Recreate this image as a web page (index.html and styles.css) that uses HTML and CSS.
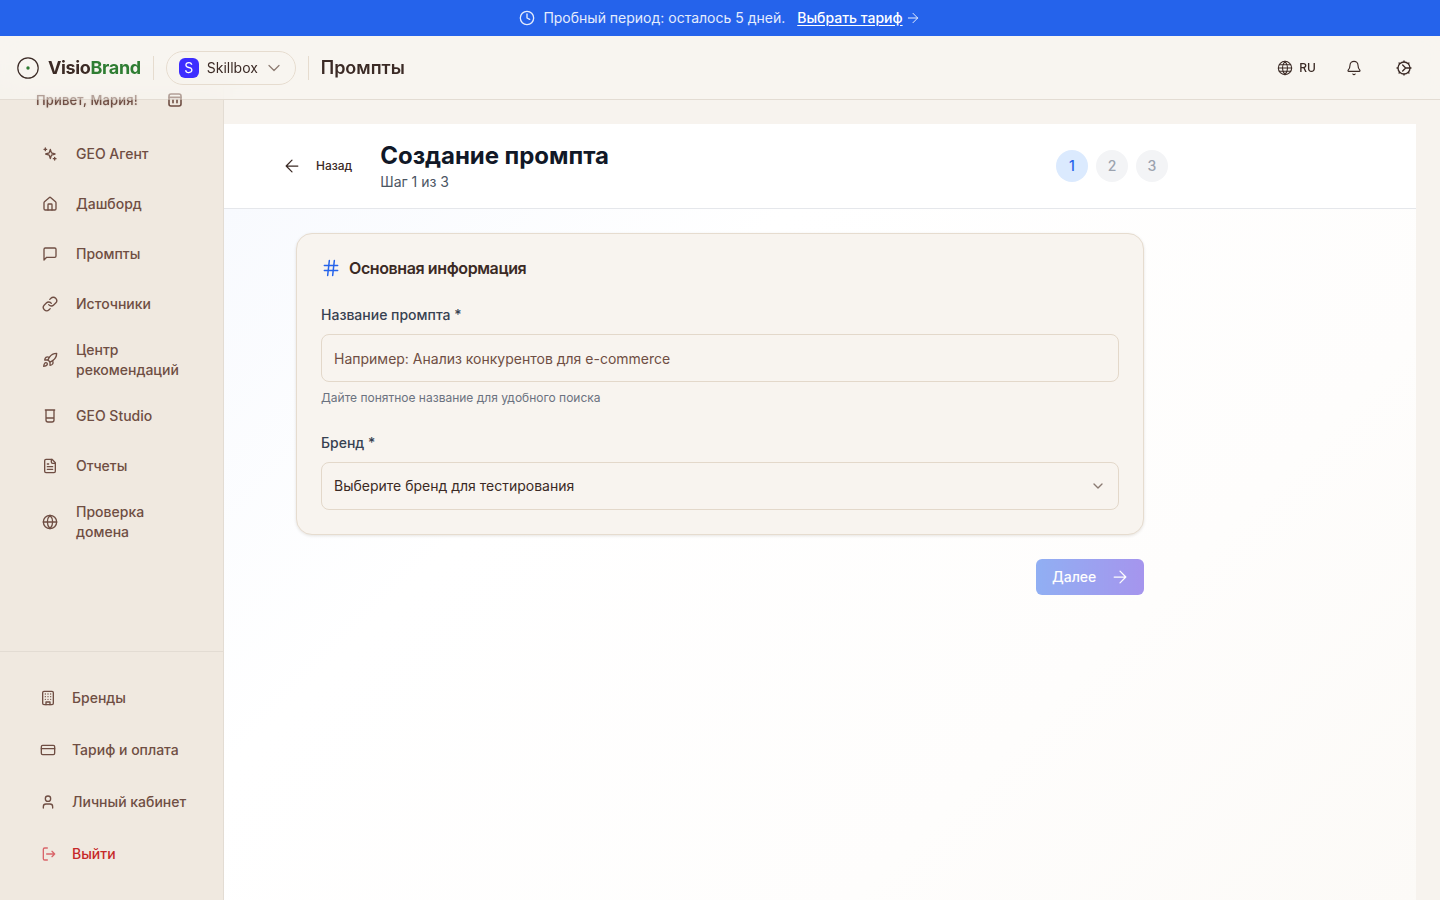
FILE: index.html
```html
<!DOCTYPE html>
<html lang="ru">
	<head>
		<meta charset="UTF-8" />
		<meta name="viewport" content="width=device-width, initial-scale=1.0" />
		<title>Создание промпта</title>
		<link rel="stylesheet" href="styles.css">
	</head>
	<body>
		<div class="trial-banner">
			<svg class="trial-clock" viewBox="0 0 24 24"><circle cx="12" cy="12" r="10"/><path d="M12 6v6l4 2"/></svg>
			<span>Пробный период: осталось 5 дней.</span>
			<a class="trial-link">Выбрать тариф</a>
			<svg class="trial-arrow" viewBox="0 0 24 24"><path d="M5 12h14M12 5l7 7-7 7"/></svg>
		</div>

		<div class="shell">
			<header class="topbar">
				<div class="logo">
					<svg class="logo-mark" viewBox="0 0 22 22"><circle cx="11" cy="11" r="10.2"/><circle class="logo-dot" cx="11" cy="11" r="1.7"/></svg>
					<span class="logo-text">Visio<b>Brand</b></span>
				</div>
				<div class="topbar-sep"></div>
				<div class="brand-pill">
					<span class="brand-badge">S</span>
					<span>Skillbox</span>
					<svg class="pill-chevron" viewBox="0 0 24 24"><path d="m6 9 6 6 6-6"/></svg>
				</div>
				<div class="topbar-sep"></div>
				<div class="topbar-title">Промпты</div>
				<div class="topbar-right">
					<div class="lang">
						<svg class="icon-globe" viewBox="0 0 24 24"><circle cx="12" cy="12" r="10"/><path d="M2 12h20M3.500 7h17M3.500 17h17M12 2a15 15 0 0 1 0 20 15 15 0 0 1 0-20"/></svg>
						<span>RU</span>
					</div>
					<svg class="icon-bell" viewBox="0 0 24 24"><path d="M10.300 21a2 2 0 0 0 3.400 0"/><path d="M3.300 15.300A1 1 0 0 0 4 17h16a1 1 0 0 0 .7-1.700C19.400 14 18 12.500 18 8A6 6 0 0 0 6 8c0 4.500-1.400 6-2.700 7.300"/></svg>
					<svg class="icon-theme" viewBox="0 0 24 24"><circle cx="12" cy="12" r="9"/><path d="M12 1.500v1M12 21.500v1M1.500 12h1M21.500 12h1M4.600 4.600l.7.7M18.700 18.700l.7.7M4.600 19.400l.7-.7M18.700 5.300l.7-.7M10 7.500 14.500 12 10 16.500M14.500 12H21"/></svg>
				</div>
			</header>

			<aside class="sidebar">
				<div class="greeting">
					<span>Привет, Мария!</span>
					<svg class="greeting-icon" viewBox="0 0 24 24"><rect x="3" y="3" width="18" height="18" rx="3"/><path d="M3 8h18M9 12v4M15 12v4"/></svg>
				</div>
				<nav class="nav-main">
					<a class="nav-item">
						<svg class="nav-icon" viewBox="0 0 24 24"><path d="m12.500 5 1.700 5.300 5.300 1.700-5.300 1.700-1.700 5.300-1.700-5.300L5.500 12l5.300-1.700z"/><path d="M5 3v4M3 5h4M19 17v4M17 19h4"/></svg>
						<span>GEO Агент</span>
					</a>
					<a class="nav-item">
						<svg class="nav-icon" viewBox="0 0 24 24"><path d="M15 21v-8a1 1 0 0 0-1-1h-4a1 1 0 0 0-1 1v8"/><path d="M3 10a2 2 0 0 1 .7-1.500l7-6a2 2 0 0 1 2.600 0l7 6a2 2 0 0 1 .7 1.500v9a2 2 0 0 1-2 2H5a2 2 0 0 1-2-2z"/></svg>
						<span>Дашборд</span>
					</a>
					<a class="nav-item">
						<svg class="nav-icon" viewBox="0 0 24 24"><path d="M21 15a2 2 0 0 1-2 2H7l-4 4V5a2 2 0 0 1 2-2h14a2 2 0 0 1 2 2z"/></svg>
						<span>Промпты</span>
					</a>
					<a class="nav-item">
						<svg class="nav-icon" viewBox="0 0 24 24"><path d="M10 13a5 5 0 0 0 7.500.5l3-3a5 5 0 0 0-7.100-7.100l-1.700 1.700"/><path d="M14 11a5 5 0 0 0-7.500-.5l-3 3a5 5 0 0 0 7.100 7.100l1.700-1.700"/></svg>
						<span>Источники</span>
					</a>
					<a class="nav-item">
						<svg class="nav-icon" viewBox="0 0 24 24"><path d="M4.500 16.500c-1.500 1.300-2 5-2 5s3.700-.5 5-2c.7-.8.7-2.100-.1-2.900a2.200 2.200 0 0 0-2.900-.1"/><path d="m12 15-3-3a22 22 0 0 1 2-3.900A12.900 12.900 0 0 1 22 2c0 2.700-.8 7.500-6 11a22 22 0 0 1-4 2"/><path d="M9 12H4s.5-3 2-4c1.600-1.100 5 0 5 0M12 15v5s3-.5 4-2c1.100-1.600 0-5 0-5"/></svg>
						<span>Центр рекомендаций</span>
					</a>
					<a class="nav-item">
						<svg class="nav-icon" viewBox="0 0 24 24"><path d="M5 3h14M6 3v15a3 3 0 0 0 3 3h6a3 3 0 0 0 3-3V3M6 15h12"/></svg>
						<span>GEO Studio</span>
					</a>
					<a class="nav-item">
						<svg class="nav-icon" viewBox="0 0 24 24"><path d="M15 2H6a2 2 0 0 0-2 2v16a2 2 0 0 0 2 2h12a2 2 0 0 0 2-2V7z"/><path d="M14 2v4a2 2 0 0 0 2 2h4M10 9H8M16 13H8M16 17H8"/></svg>
						<span>Отчеты</span>
					</a>
					<a class="nav-item">
						<svg class="nav-icon" viewBox="0 0 24 24"><circle cx="12" cy="12" r="10"/><path d="M12 2a14.500 14.500 0 0 0 0 20 14.500 14.500 0 0 0 0-20M2 12h20"/></svg>
						<span>Проверка домена</span>
					</a>
				</nav>
				<div class="nav-bottom">
					<a class="nav-item">
						<svg class="nav-icon" viewBox="0 0 24 24"><rect x="4" y="2" width="16" height="20" rx="2"/><path d="M9 22v-4h6v4M8 6h.01M12 6h.01M16 6h.01M8 10h.01M12 10h.01M16 10h.01M8 14h.01M12 14h.01M16 14h.01"/></svg>
						<span>Бренды</span>
					</a>
					<a class="nav-item">
						<svg class="nav-icon" viewBox="0 0 24 24"><rect x="2" y="5" width="20" height="14" rx="2"/><path d="M2 10h20"/></svg>
						<span>Тариф и оплата</span>
					</a>
					<a class="nav-item">
						<svg class="nav-icon" viewBox="0 0 24 24"><path d="M19 21v-2a4 4 0 0 0-4-4H9a4 4 0 0 0-4 4v2"/><circle cx="12" cy="7" r="4"/></svg>
						<span>Личный кабинет</span>
					</a>
					<a class="nav-item nav-logout">
						<svg class="nav-icon" viewBox="0 0 24 24"><path d="M11 21H7a2 2 0 0 1-2-2V5a2 2 0 0 1 2-2h4M18 16l4-4-4-4M22 12H10"/></svg>
						<span>Выйти</span>
					</a>
				</div>
			</aside>

			<main class="content">
				<section class="panel">
					<div class="page-head">
						<div class="page-head-inner">
							<a class="back-btn">
								<svg class="back-arrow" viewBox="0 0 24 24"><path d="m12 19-7-7 7-7M19 12H5"/></svg>
								<span>Назад</span>
							</a>
							<div class="page-title">
								<h1>Создание промпта</h1>
								<p>Шаг 1 из 3</p>
							</div>
							<div class="steps">
								<span class="step step-active">1</span>
								<span class="step">2</span>
								<span class="step">3</span>
							</div>
						</div>
					</div>
					<div class="page-body">
						<div class="form-wrap">
							<div class="card">
								<div class="card-title">
									<svg class="hash-icon" viewBox="0 0 24 24"><path d="M4 9h16M4 15h16M10 3 8 21M16 3l-2 18"/></svg>
									<span>Основная информация</span>
								</div>
								<label class="field-label">Название промпта *</label>
								<input class="field-input" type="text" placeholder="Например: Анализ конкурентов для e-commerce" />
								<p class="field-hint">Дайте понятное название для удобного поиска</p>
								<label class="field-label field-label-second">Бренд *</label>
								<div class="field-select">
									<span>Выберите бренд для тестирования</span>
									<svg class="select-chevron" viewBox="0 0 24 24"><path d="m6 9 6 6 6-6"/></svg>
								</div>
							</div>
							<div class="form-actions">
								<button class="next-btn">
									<span>Далее</span>
									<svg class="next-arrow" viewBox="0 0 24 24"><path d="M5 12h14M12 5l7 7-7 7"/></svg>
								</button>
							</div>
						</div>
					</div>
				</section>
			</main>
		</div>
	</body>
</html>
```

FILE: styles.css
```css
* {
	box-sizing: border-box;
}
html,
body {
	height: 100%;
}
body {
	margin: 0;
	font-family: Inter, 'Noto Sans', sans-serif;
	font-size: 14px;
	line-height: 20px;
	background-color: #f7f3ee;
	color: #3b2a25;
	overflow: hidden;
}
svg {
	fill: none;
	stroke: currentColor;
	stroke-width: 2;
	stroke-linecap: round;
	stroke-linejoin: round;
	flex-shrink: 0;
}

.trial-banner {
	height: 36px;
	display: flex;
	align-items: center;
	justify-content: center;
	background-color: #2563eb;
	color: #e4ecfd;
	font-size: 14px;
}
.trial-clock {
	width: 16px;
	height: 16px;
	margin-right: 8px;
}
.trial-link {
	margin-left: 12px;
	color: #fff;
	font-weight: 500;
	text-decoration: underline;
	text-underline-offset: 2px;
}
.trial-arrow {
	width: 16px;
	height: 16px;
	margin-left: 2px;
	stroke-width: 1.500;
}

.shell {
	position: relative;
	display: flex;
	height: 864px;
}
.topbar {
	position: absolute;
	top: 0;
	left: 0;
	right: 0;
	z-index: 10;
	height: 64px;
	display: flex;
	align-items: center;
	padding: 0 28px 0 17px;
	background-color: rgba(248, 245, 240, 0.8);
	border-bottom: 1px solid #e3dcd3;
	backdrop-filter: blur(12px);
}
.logo {
	display: flex;
	align-items: center;
	gap: 9px;
}
.logo-mark {
	width: 22px;
	height: 22px;
	stroke-width: 1.200;
	color: #3b2a25;
}
.logo-dot {
	fill: #2e7d32;
	stroke: none;
}
.logo-text {
	font-size: 18px;
	font-weight: 700;
	color: #3b2a25;
	letter-spacing: -0.36px;
}
.logo-text b {
	font-weight: 700;
	color: #2e7d32;
}
.topbar-sep {
	width: 1px;
	height: 24px;
	margin: 0 12px;
	background-color: #e6dccf;
}
.brand-pill {
	width: 130px;
	height: 34px;
	display: flex;
	align-items: center;
	gap: 8px;
	padding: 0 12px;
	border: 1px solid #e6dccf;
	border-radius: 17px;
	color: #3b2a25;
}
.brand-badge {
	width: 20px;
	height: 20px;
	flex-shrink: 0;
	display: flex;
	align-items: center;
	justify-content: center;
	border-radius: 6px;
	background-color: #3d2dff;
	color: #fff;
	font-size: 14px;
}
.pill-chevron {
	width: 20px;
	height: 20px;
	margin-left: -2px;
	stroke-width: 1.500;
	color: #8d7c72;
}
.topbar-title {
	font-size: 18px;
	font-weight: 600;
	color: #3b2a25;
}
.topbar-right {
	margin-left: auto;
	display: flex;
	align-items: center;
}
.lang {
	display: flex;
	align-items: center;
	gap: 6px;
	font-size: 12px;
	font-weight: 500;
}
.icon-globe {
	width: 16px;
	height: 16px;
	stroke-width: 1.600;
}
.icon-bell {
	width: 16px;
	height: 16px;
	margin-left: 30px;
	stroke-width: 1.700;
}
.icon-theme {
	width: 16px;
	height: 16px;
	margin-left: 34px;
	stroke-width: 2;
}

.sidebar {
	width: 224px;
	height: 820px;
	margin-top: 44px;
	flex-shrink: 0;
	display: flex;
	flex-direction: column;
	background-color: #f0e9e0;
	border-right: 1px solid #e3dcd3;
	color: #6f4e43;
}
.greeting {
	position: relative;
	z-index: 11;
	height: 24px;
	margin-top: 8px;
	padding: 0 40px 0 36px;
	display: flex;
	align-items: center;
	justify-content: space-between;
	font-size: 13px;
	font-weight: 500;
	letter-spacing: 0.15px;
	text-shadow: 0 0 2px rgba(111, 78, 67, 0.35);
	-webkit-mask-image: linear-gradient(to bottom, rgba(0, 0, 0, 0.5) 12px, #000 12px);
	mask-image: linear-gradient(to bottom, rgba(0, 0, 0, 0.5) 12px, #000 12px);
}
.greeting-icon {
	width: 16px;
	height: 16px;
	stroke-width: 2.400;
}
.nav-main {
	flex: 1;
	display: flex;
	flex-direction: column;
	gap: 6px;
	padding: 20px 24px 0 42px;
}
.nav-item {
	min-height: 44px;
	display: flex;
	align-items: center;
	gap: 18px;
	padding: 8px 0;
	font-weight: 500;
	color: #6f4e43;
}
.nav-icon {
	width: 16px;
	height: 16px;
	stroke-width: 2;
}
.nav-bottom {
	display: flex;
	flex-direction: column;
	gap: 8px;
	padding: 24px 24px 24px 40px;
	border-top: 1px solid #e3dcd3;
}
.nav-bottom .nav-item {
	gap: 16px;
}
.nav-logout {
	color: #c62828;
}
.nav-logout .nav-icon {
	color: #d9656a;
}

.content {
	flex: 1;
	min-width: 0;
	padding: 88px 24px 0 0;
}
.panel {
	height: 100%;
	display: flex;
	flex-direction: column;
	background-color: #fff;
}
.page-head {
	height: 85px;
	flex-shrink: 0;
	background-color: #fff;
	border-bottom: 1px solid #e5e7eb;
}
.page-head-inner {
	width: 896px;
	height: 84px;
	margin-left: 48px;
	display: flex;
	align-items: center;
	gap: 16px;
}
.back-btn {
	display: flex;
	align-items: center;
	gap: 14px;
	padding: 0 12px 0 10px;
	font-size: 12px;
	font-weight: 500;
	color: #3b2a25;
}
.back-arrow {
	width: 20px;
	height: 20px;
	stroke-width: 1.500;
}
.page-title h1 {
	margin: 0;
	font-size: 24px;
	line-height: 32px;
	font-weight: 700;
	letter-spacing: -0.05px;
	color: #111827;
}
.page-title p {
	margin: 0;
	font-size: 14px;
	line-height: 20px;
	color: #4b5563;
}
.steps {
	margin-left: auto;
	display: flex;
	gap: 8px;
}
.step {
	width: 32px;
	height: 32px;
	display: flex;
	align-items: center;
	justify-content: center;
	border-radius: 50%;
	background-color: #f3f4f6;
	color: #9ca3af;
	font-weight: 500;
}
.step-active {
	background-color: #dbeafe;
	color: #2563eb;
}

.page-body {
	flex: 1;
	padding: 24px 0 0 72px;
	background: linear-gradient(135deg, #f8fafe 0%, #fff 30%, #fefdfc 70%, #fcfaf7 100%);
}
.form-wrap {
	width: 848px;
}
.card {
	padding: 24px;
	display: flex;
	flex-direction: column;
	background-color: #f8f4ef;
	border: 1px solid #e6dccf;
	border-radius: 16px;
	box-shadow: 0 1px 3px rgba(60, 40, 20, 0.12);
}
.card-title {
	display: flex;
	align-items: center;
	gap: 8px;
	height: 20px;
	margin-bottom: 27px;
	font-size: 16px;
	font-weight: 600;
	letter-spacing: -0.4px;
	color: #3b2a25;
}
.hash-icon {
	width: 20px;
	height: 20px;
	color: #2563eb;
	stroke-width: 1.800;
}
.field-label {
	margin-bottom: 9px;
	font-weight: 500;
	color: #374151;
}
.field-label-second {
	margin-top: 27px;
}
.field-input,
.field-select {
	width: 100%;
	height: 48px;
	padding: 0 12px;
	background-color: #f8f4ef;
	border: 1px solid #e3d8ca;
	border-radius: 8px;
	font-family: inherit;
	font-size: 14px;
	color: #3b2a25;
}
.field-input::placeholder {
	color: #6f4e43;
	opacity: 1;
}
.field-select {
	display: flex;
	align-items: center;
	justify-content: space-between;
}
.select-chevron {
	width: 16px;
	height: 16px;
	stroke-width: 2;
	color: #8a7a72;
}
.field-hint {
	margin: 8px 0 0;
	font-size: 12px;
	line-height: 16px;
	color: #6b7280;
}
.form-actions {
	display: flex;
	justify-content: flex-end;
	margin-top: 24px;
}
.next-btn {
	width: 108px;
	height: 36px;
	display: flex;
	align-items: center;
	gap: 14px;
	padding: 0 14px 0 16px;
	border: none;
	border-radius: 6px;
	background: linear-gradient(90deg, #2563eb, #4f2fe0);
	opacity: 0.5;
	color: #fff;
	font-family: inherit;
	font-size: 14px;
	line-height: 20px;
	font-weight: 500;
}
.next-arrow {
	width: 20px;
	height: 20px;
	stroke-width: 1.500;
}
```
